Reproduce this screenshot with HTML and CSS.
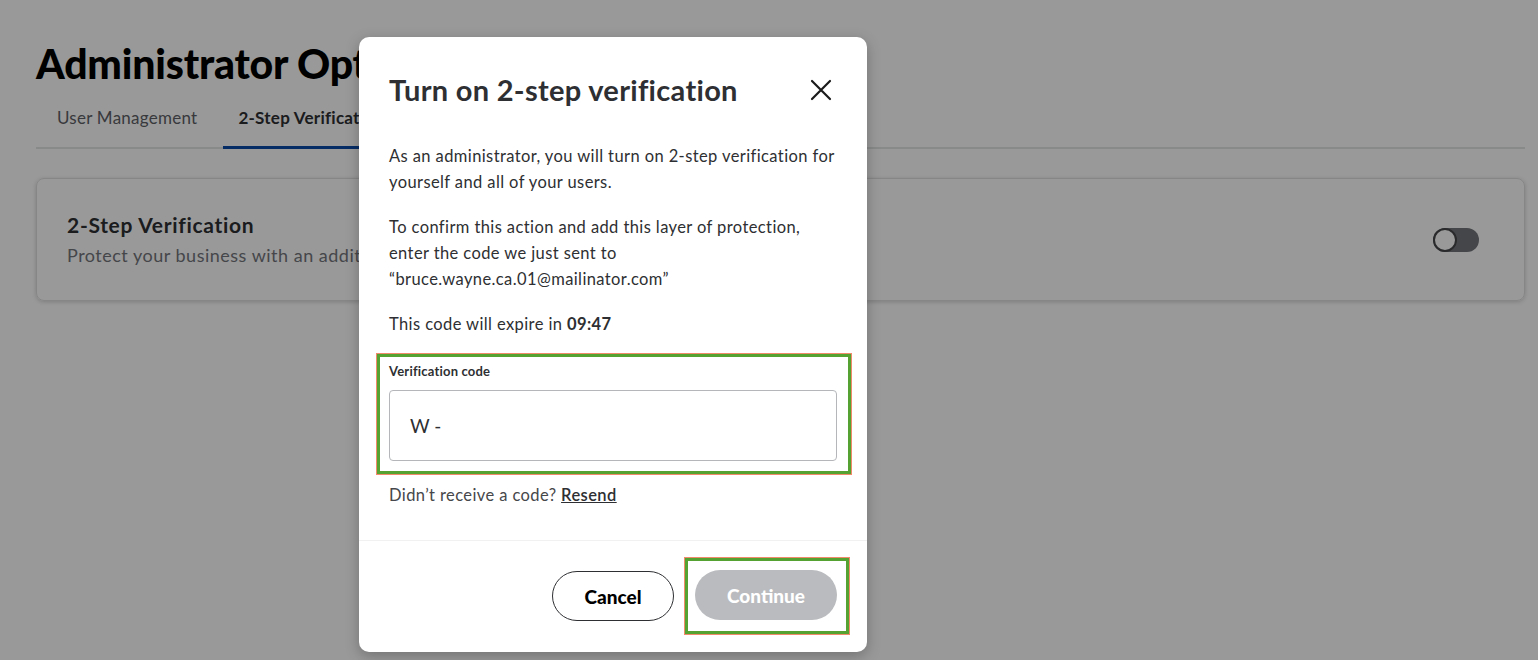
FILE: index.html
```html
<!DOCTYPE html>
<html lang="en">
<head>
<meta charset="utf-8">
<title>Administrator Options</title>
<link rel="stylesheet" href="styles.css">
</head>
<body>
<div class="page">
  <h1 class="page-title">Administrator Options</h1>
  <nav class="tabs">
    <div class="tab">User Management</div>
    <div class="tab tab-active">2-Step Verification</div>
  </nav>
  <section class="card">
    <div class="card-text">
      <div class="card-title">2-Step Verification</div>
      <div class="card-desc">Protect your business with an additional layer of security for all of your users.</div>
    </div>
    <div class="toggle"><span class="knob"></span></div>
  </section>
</div>
<div class="overlay"></div>
<div class="modal" role="dialog">
  <header class="modal-head">
    <h2 class="modal-title">Turn on 2-step verification</h2>
    <svg class="close" width="22" height="22" viewBox="0 0 22 22"><path d="M2 2 L20 20 M20 2 L2 20" stroke="#1a1a1a" stroke-width="2.2" stroke-linecap="round"/></svg>
  </header>
  <div class="modal-body">
    <p class="para">As an administrator, you will turn on 2-step verification for yourself and all of your users.</p>
    <p class="para">To confirm this action and add this layer of protection, enter the code we just sent to<br>“bruce.wayne.ca.01@mailinator.com”</p>
    <p class="para">This code will expire in <b>09:47</b></p>
    <div class="hl hl-field">
      <label class="field-label">Verification code</label>
      <div class="input">W -</div>
    </div>
    <p class="resend">Didn’t receive a code? <span class="link">Resend</span></p>
  </div>
  <footer class="modal-foot">
    <button class="btn btn-cancel">Cancel</button>
    <div class="hl hl-btn"><button class="btn btn-continue">Continue</button></div>
  </footer>
</div>
</body>
</html>
```

FILE: styles.css
```css
* { box-sizing: border-box; }
html, body { margin: 0; padding: 0; }
body {
  width: 1538px;
  height: 660px;
  overflow: hidden;
  background: #ffffff;
  font-family: "Lato", "Noto Sans", sans-serif;
  color: #2e2f32;
  position: relative;
}
.page {
  padding: 36px 13px 0 36px;
}
.page-title {
  margin: 0;
  font-size: 41px;
  font-weight: 900;
  color: #000;
  line-height: 56px;
  letter-spacing: -0.2px;
}
.tabs {
  display: flex;
  gap: 11px;
  margin-top: 3px;
  padding-left: 6px;
  border-bottom: 2px solid #e3e4e5;
  height: 54px;
}
.tab {
  padding: 0 15px;
  font-size: 17px;
  line-height: 46px;
  letter-spacing: 0.25px;
  color: #5e6066;
}
.tab-active {
  font-weight: 700;
  color: #2e2f32;
  border-bottom: 3px solid #0a4aa8;
  margin-bottom: -2px;
  padding-right: 60px;
}
.card {
  margin-top: 29px;
  height: 123px;
  border: 1px solid #e0e0e0;
  border-radius: 8px;
  box-shadow: 0 1px 4px rgba(0,0,0,0.18);
  display: flex;
  align-items: center;
  justify-content: space-between;
  padding: 0 45px 0 30px;
}
.card-title {
  font-size: 21px;
  font-weight: 700;
  color: #2e2f32;
  line-height: 30px;
  letter-spacing: 0.7px;
}
.card-desc {
  font-size: 18px;
  color: #74767c;
  line-height: 30px;
  letter-spacing: 0.5px;
}
.toggle {
  width: 46px;
  height: 24px;
  border-radius: 12px;
  background: #74767c;
  position: relative;
}
.knob {
  position: absolute;
  left: 0;
  top: 0;
  width: 24px;
  height: 24px;
  border-radius: 50%;
  background: #fff;
  border: 2px solid #46474a;
}
.overlay {
  position: absolute;
  inset: 0;
  background: rgba(0,0,0,0.4);
}
.modal {
  position: absolute;
  left: 359px;
  top: 37px;
  width: 508px;
  height: 615px;
  background: #fff;
  border-radius: 10px;
  box-shadow: 0 4px 14px rgba(0,0,0,0.25);
  display: flex;
  flex-direction: column;
}
.modal-head {
  display: flex;
  justify-content: space-between;
  align-items: center;
  padding: 33px 35px 0 30px;
}
.modal-title {
  margin: 0;
  font-size: 29px;
  font-weight: 700;
  color: #2e2f32;
  line-height: 40px;
  letter-spacing: 0.3px;
}
.modal-body {
  padding: 33px 30px 0 30px;
}
.para {
  margin: 0 0 19px 0;
  font-size: 16.5px;
  line-height: 26px;
  letter-spacing: 0.4px;
  color: #2e2f32;
}
.para:nth-child(3) { margin-bottom: 17px; }
.para b { font-weight: 700; }
.hl {
  border: 3px solid #55a233;
  outline: 1px solid #f08a6a;
}
.hl-field {
  margin: 0 -14px 0 -12px;
  padding: 5px 11px 10px 9px;
  height: 120px;
}
.field-label {
  display: block;
  font-size: 13px;
  font-weight: 700;
  color: #2e2f32;
  line-height: 18px;
  letter-spacing: 0.2px;
}
.input {
  margin-top: 10px;
  height: 71px;
  border: 1px solid #b4b6ba;
  border-radius: 4px;
  padding: 0 20px;
  display: flex;
  align-items: center;
  font-size: 19px;
  color: #2e2f32;
}
.resend {
  margin: 8px 0 0 0;
  font-size: 16.5px;
  line-height: 26px;
  letter-spacing: 0.4px;
  color: #46474a;
}
.link {
  text-decoration: underline;
  color: #2e2f32;
  font-weight: 600;
}
.modal-foot {
  margin-top: auto;
  border-top: 1px solid #f1f1f2;
  display: flex;
  justify-content: flex-end;
  align-items: center;
  gap: 11px;
  padding: 17px 18px 18px 0;
}
.btn {
  font-family: inherit;
  height: 50px;
  border-radius: 25px;
  font-size: 19px;
  font-weight: 900;
  cursor: pointer;
}
.btn-cancel {
  width: 122px;
  background: #fff;
  border: 1px solid #2e2f32;
  color: #000;
}
.hl-btn {
  padding: 9px 9px 11px 7px;
}
.btn-continue {
  display: block;
  width: 142px;
  background: #babbbe;
  border: none;
  color: #fff;
}
```
